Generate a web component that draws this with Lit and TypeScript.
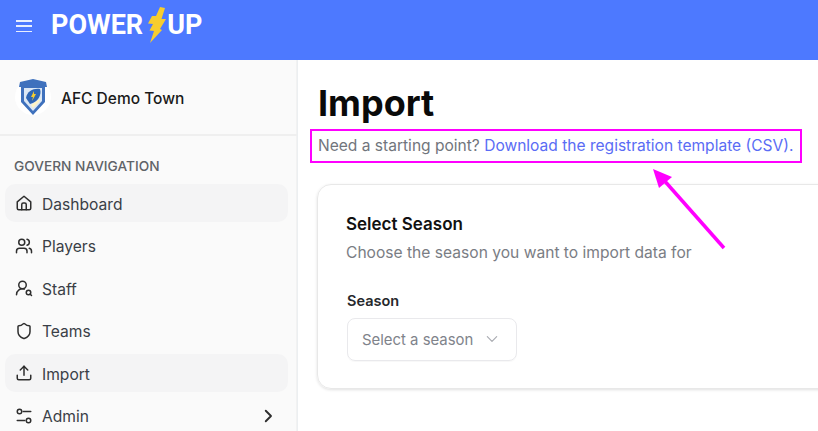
import { LitElement, html, css, svg } from 'lit';
import { customElement } from 'lit/decorators.js';

const icon = (body: unknown) => html`<svg class="ico" viewBox="0 0 24 24" fill="none" stroke="currentColor" stroke-width="2" stroke-linecap="round" stroke-linejoin="round">${body}</svg>`;

const NAV = [
  { label: 'Dashboard', active: true, body: svg`<path d="M3 10.500 12 3l9 7.500V19a2 2 0 0 1-2 2H5a2 2 0 0 1-2-2z"/><path d="M9 21v-7a2 2 0 0 1 2-2h2a2 2 0 0 1 2 2v7"/>` },
  { label: 'Players', body: svg`<circle cx="9" cy="7" r="4"/><path d="M2 21v-2a4 4 0 0 1 4-4h6a4 4 0 0 1 4 4v2"/><path d="M16 3.100a4 4 0 0 1 0 7.800"/><path d="M22 21v-2a4 4 0 0 0-3-3.900"/>` },
  { label: 'Staff', body: svg`<circle cx="10" cy="8" r="5"/><path d="M2 21a8 8 0 0 1 10.400-7.600"/><circle cx="18" cy="18" r="3"/><path d="m22 22-1.900-1.900"/>` },
  { label: 'Teams', body: svg`<path d="M20 13c0 5-3.500 7.500-7.700 9a1 1 0 0 1-.6 0C7.500 20.500 4 18 4 13V6a1 1 0 0 1 1-1c2 0 4.500-1.200 6.200-2.700a1.200 1.200 0 0 1 1.600 0C14.500 3.800 17 5 19 5a1 1 0 0 1 1 1z"/>` },
  { label: 'Import', active: true, body: svg`<path d="M21 15v4a2 2 0 0 1-2 2H5a2 2 0 0 1-2-2v-4"/><path d="m17 8-5-5-5 5"/><path d="M12 3v12"/>` },
  { label: 'Admin', more: true, body: svg`<path d="M11 6h10"/><path d="M3 18h10"/><circle cx="6" cy="6" r="3"/><circle cx="18" cy="18" r="3"/>` },
];

@customElement('app-root')
export class AppRoot extends LitElement {
  static styles = css`
    :host {
      display: block;
      position: relative;
      width: 818px;
      height: 431px;
      overflow: hidden;
      background: #fff;
      font-family: Inter, "Liberation Sans", sans-serif;
      color: #111;
    }
    .top {
      height: 60px;
      background: #4d79ff;
      display: flex;
      align-items: flex-start;
      padding-left: 16px;
      gap: 19px;
    }
    .burger { width: 16px; height: 12px; margin-top: 20px; display: flex; flex-direction: column; justify-content: space-between; }
    .burger i { display: block; height: 1.5px; background: #e8eeff; }
    .logo {
      display: flex;
      align-items: flex-start;
      color: #fff;
      font-family: Roboto, sans-serif;
      font-weight: 700;
      font-size: 27px;
      line-height: 28px;
      margin-top: 11px;
    }
    .bolt { width: 22px; height: 36px; margin: -4px 0 0 2px; }
    .body { display: flex; height: 371px; }
    .side {
      width: 297px;
      flex: none;
      background: #fafafa;
      border-right: 1px solid #eceff1;
      box-shadow: inset -1px 0 0 #f2f2f2;
    }
    .team {
      height: 74px;
      border-bottom: 2px solid #efefef;
      display: flex;
      align-items: center;
      gap: 10px;
      padding-left: 15px;
      font-size: 15.500px;
      font-weight: 500;
      color: #1a1a1a;
    }
    .team span { padding-top: 2px; }
    .crest { width: 36px; height: 36px; border-radius: 50%; background: #fff; display: flex; align-items: center; justify-content: center; }
    .crest svg { width: 28px; height: 36px; }
    .heading {
      margin: 21px 0 0 14px;
      font-size: 13.700px;
      line-height: 18px;
      font-weight: 500;
      color: #5f6368;
    }
    nav { margin: 8.900px 9px 0 5px; display: flex; flex-direction: column; gap: 4.500px; }
    .item {
      height: 38px;
      display: flex;
      align-items: center;
      padding-left: 10px;
      gap: 9px;
      border-radius: 10px;
      font-size: 15.600px;
      color: #3a3f47;
    }
    .item span { padding-top: 3px; }
    .item.active { background: #f4f4f5; }
    .ico { width: 18px; height: 18px; flex: none; color: #2e2e2e; margin-top: 1px; }
    .more { margin-left: auto; margin-right: 11px; }
    main { flex: 1; padding: 21px 0 0 20px; min-width: 0; }
    h1 { margin: 0; font-size: 36px; line-height: 44px; font-weight: 700; color: #0a0a0a; }
    .lead { margin: 10px 0 0; font-size: 15.550px; line-height: 22px; color: #71757c; white-space: nowrap; }
    .lead a { color: #5a6cf5; text-decoration: none; }
    .card {
      margin: 27px 0 0 -1px;
      width: 560px;
      height: 205px;
      box-sizing: border-box;
      border: 1px solid #e8e8e8;
      border-radius: 14px;
      box-shadow: 0 1px 3px rgba(0,0,0,.12);
      padding: 27px 28px;
    }
    h2 { margin: 0; font-size: 17px; line-height: 24px; font-weight: 600; color: #111; }
    .desc { margin: 6px 0 0; font-size: 15.600px; line-height: 22px; color: #7a7d84; white-space: nowrap; }
    label { display: block; margin: 27px 0 0 1px; font-size: 14.500px; line-height: 20px; font-weight: 600; color: #26282c; }
    .select {
      margin: 7px 0 0 1px;
      width: 170px;
      height: 43px;
      box-sizing: border-box;
      border: 1px solid #e9e9ec;
      border-radius: 8px;
      display: flex;
      align-items: center;
      padding-left: 14px;
      font-size: 14.900px;
      color: #80838b;
      box-shadow: 0 1px 1px rgba(0,0,0,.03);
    }
    .select svg { width: 14px; height: 14px; margin: -2px 0 0 12px; color: #a9abb1; }
    .mark { position: absolute; border: 2px solid #ff00ff; left: 310px; top: 129px; width: 488px; height: 30px; pointer-events: none; }
    .arrow { position: absolute; left: 0; top: 0; width: 818px; height: 431px; pointer-events: none; }
  `;

  render() {
    return html`
      <div class="top">
        <div class="burger"><i></i><i></i><i></i></div>
        <div class="logo">
          <span>POWER</span>
          <svg class="bolt" viewBox="0 0 22 36"><path fill="#f7cd2e" d="M15 0 20 1 16.500 12 21 12 15 22 17 23 5 36 9 24 4.500 23.500 8 17 3 16.500 7 9 11 9z"/></svg>
          <span>UP</span>
        </div>
      </div>
      <div class="body">
        <aside class="side">
          <div class="team">
            <div class="crest">
              <svg viewBox="0 0 28 36">
                <path fill="#3f71bd" d="M1 3 14 0 27 3 28 8 26 8 26 23 14 36 2 23 2 8 0 8z"/>
                <path fill="#dbe7f5" d="M5 9H23V22L14 32 5 22z"/>
                <path fill="#2f66b5" d="M7 19C8 12 15 9 21 10 23 16 19 23 11 25z"/>
                <path fill="#fff4c4" d="M12 26 22 19 20 23 14 29z"/>
                <path fill="#f7cd2e" d="M15 12 12 18 14 18 13 22 17 15 15 15z"/>
              </svg>
            </div>
            <span>AFC Demo Town</span>
          </div>
          <div class="heading">GOVERN NAVIGATION</div>
          <nav>
            ${NAV.map(n => html`
              <div class="item ${n.active ? 'active' : ''}">
                ${icon(n.body)}
                <span>${n.label}</span>
                ${n.more ? html`<svg class="ico more" viewBox="0 0 24 24" fill="none" stroke="currentColor" stroke-width="2.500" stroke-linecap="round" stroke-linejoin="round"><path d="m9 5 7 7-7 7"/></svg>` : ''}
              </div>`)}
          </nav>
        </aside>
        <main>
          <h1>Import</h1>
          <p class="lead">Need a starting point? <a href="#">Download the registration template (CSV).</a></p>
          <section class="card">
            <h2>Select Season</h2>
            <p class="desc">Choose the season you want to import data for</p>
            <label>Season</label>
            <div class="select">
              <span>Select a season</span>
              <svg viewBox="0 0 24 24" fill="none" stroke="currentColor" stroke-width="2" stroke-linecap="round" stroke-linejoin="round"><path d="m4 8 8 8 8-8"/></svg>
            </div>
          </section>
        </main>
      </div>
      <div class="mark"></div>
      <svg class="arrow" viewBox="0 0 818 431">
        <path d="M724 248 662 178" stroke="#ff00ff" stroke-width="3.500" fill="none"/>
        <path d="M653 169 672 177 659 188z" fill="#ff00ff"/>
      </svg>
    `;
  }
}
